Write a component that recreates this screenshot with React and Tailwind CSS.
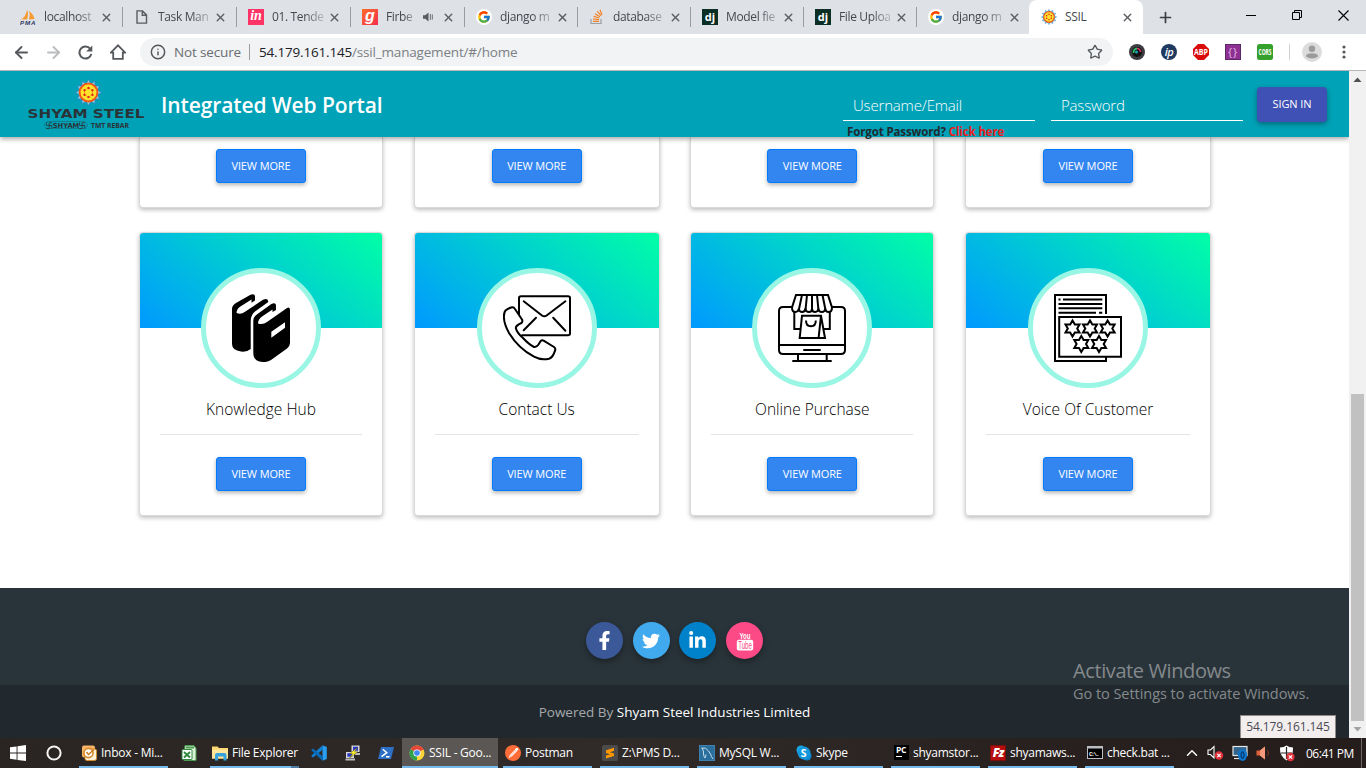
import React from 'react';
import { ArrowLeft, ArrowRight, Star, X, Plus, Info, ChevronUp } from 'lucide-react';
import { FaFacebookF, FaTwitter, FaLinkedinIn } from 'react-icons/fa';
import { FcGoogle } from 'react-icons/fc';

/* ---------- small drawings ---------- */

function Sun({ size = 16 }) {
  const rays = Array.from({ length: 12 }, (_, i) => i * 30);
  return (
    <svg width={size} height={size} viewBox="0 0 26 26">
      {rays.map((a) => (
        <path key={a} d="M10.6 4.6 L13 0.6 L15.4 4.6Z" fill="#8fd3e6" stroke="#2a86c8" strokeWidth="0.7" transform={`rotate(${a} 13 13)`} />
      ))}
      <circle cx="13" cy="13" r="8.6" fill="#ffe32b" stroke="#f0581c" strokeWidth="1.9" />
      <path d="M13 8.6 L16.8 10.8 V15.2 L13 17.4 L9.2 15.2 V10.8Z" fill="none" stroke="#f5a01c" strokeWidth="0.8" />
      {[0, 60, 120, 180, 240, 300].map((a) => (
        <circle key={a} cx="13" cy="8.6" r="1.15" fill="#e0241c" transform={`rotate(${a} 13 13)`} />
      ))}
    </svg>
  );
}

const PmaIcon = () => (
  <svg width="16" height="16" viewBox="0 0 16 16">
    <path d="M7 0.5 Q9 5 7 10.5 L2 10.5 Q6.5 6 7 0.5Z M9 2 Q13.5 5 14.5 10 L9 10.5 Q10.5 6 9 2Z" fill="#f79a33" />
    <path d="M4.5 3 Q4.5 8 0.8 10.5 H3Z" fill="#f9b978" />
    <text x="0" y="15.8" fontSize="6.2" fontWeight="900" fontStyle="italic" fontFamily="Liberation Sans, sans-serif" fill="#2e3863" textLength="15.5">PMA</text>
  </svg>
);
const InIcon = () => (
  <span className="flex h-4 w-4 items-center justify-center bg-[#ff3366] pb-[2px] font-['Liberation_Serif',serif] text-[14px] font-bold italic leading-none text-white">in</span>
);
const GIcon = () => (
  <span className="flex h-4 w-4 items-center justify-center bg-gradient-to-br from-[#fa6a1f] to-[#f5264d] pb-[3px] font-['Liberation_Sans',sans-serif] text-[16px] font-bold italic leading-none text-white">g</span>
);
const GoogleIcon = () => (
  <span className="flex h-4 w-4 items-center justify-center rounded-full bg-white"><FcGoogle size={14} /></span>
);
const StackIcon = () => (
  <svg width="16" height="16" viewBox="0 0 16 16" fill="none" strokeWidth="1.2">
    <path d="M2 10 V14.5 H12 V10" stroke="#9aa0a6" />
    <path d="M4 12.3 H10 M4 10 L10 10.6 M4.6 7.4 L10.3 9 M6 4.7 L11 7.7 M8.2 2.2 L12 6.6 M11 0.8 L13 6" stroke="#f48024" />
  </svg>
);
const DjIcon = () => (
  <span className="flex h-4 w-4 items-center justify-center bg-[#0c2f25] pb-[2px] font-['Open_Sans',sans-serif] text-[11px] font-bold leading-none text-white">dj</span>
);
const PageIcon = () => (
  <svg width="12" height="14" viewBox="0 0 12 14" fill="none" stroke="#5a5d61" strokeWidth="1.4"><path d="M1 0.9 H6.5 L10.5 4.9 V13.1 H1Z M6.3 1 V5.2 H10.5" /></svg>
);
const SpeakerIcon = () => (
  <svg width="11" height="10" viewBox="0 0 11 10"><path d="M0 3.2 H2.2 L5.5 0.5 V9.5 L2.2 6.8 H0Z" fill="#5a5d61" /><path d="M7.3 2 V8 M9.3 2.4 V7.6" stroke="#6b6e72" strokeWidth="1" /></svg>
);

const BooksIcon = () => (
  <svg width="68" height="68" viewBox="0 0 68 68">
    <path d="M5 15 Q5 11.5 9 9 L23.5 0.8 Q28 -1.2 28 3 V6.5 L24.5 8.8 V5.6 L13 12.8 Q9.4 15.4 9.6 19 Q14 20.8 18 17.8 L36 5.8 Q41 3.6 41.3 8 L29 16.8 Q23.7 20.5 23.7 27 V55 Q20 58.2 14 57.5 Q5 56.3 5 50Z" />
    <path d="M26.3 27 Q26.3 22.5 30.5 20 L44 10.2 Q49 7.4 49 12 V16 L45.5 18 V15.4 L35 22.5 Q31 25.5 31 29.5 Q36 31 40 28 L60 14 Q63 12.2 63 16 V49 Q63 52.3 60 54.5 L44 66 Q40 68.8 34 67.8 Q26.3 66.5 26.3 59Z" />
    <path d="M44.3 37.7 L58 28.3 V33.7 L44.3 43.7Z" fill="#fff" />
  </svg>
);
const ContactIcon = () => (
  <svg width="68" height="68" viewBox="0 0 68 68" fill="none" stroke="#000" strokeWidth="2" strokeLinecap="round" strokeLinejoin="round">
    <path d="M16 20 V4 Q16 2.2 18 2.2 H65 Q67 2.2 67 4 V39.5 Q67 41.3 65 41.3 H19" />
    <path d="M20.7 7.3 L39 21.5 Q41.3 23.2 43.6 21.5 L62.4 7.3 M33 23.7 L20.7 36.3 M50.2 23.7 L62.4 36.8" />
    <path d="M2.5 16.5 Q5.5 14 9.2 13.2 Q10.8 13 12 15 L19 25.5 Q20 27.4 18.4 29 Q12.8 31.5 12.8 34 Q14 39 20 44 Q26 50.5 31 53 Q33.4 53.6 35.5 50.5 L37.5 47.2 Q39 45.6 41 46.8 L51 53 Q53 54.5 52 56.6 Q50 63.5 46 64.7 Q38 66.6 31 62.7 Q15.5 54.5 6 39 Q1 30 0.9 23 Q0.8 18.5 2.5 16.5Z" />
  </svg>
);
const ShopIcon = () => (
  <svg width="68" height="68" viewBox="0 0 68 68" fill="none" stroke="#000" strokeWidth="2">
    <path d="M14 13 H5 Q1 13 1 17 V56 Q1 60 5 60 H63 Q67 60 67 56 V17 Q67 13 63 13 H54 M1 51 H67 M25.3 56 H42.7 M20 60 V67 M48.7 60 V67 M14.3 67 H53.7" />
    <path d="M18 1 H50 L54 13.5 Q54 18 50.5 18 Q47.5 18 47.3 14.5 Q47 18 43.8 18 Q40.6 18 40.4 14.5 Q40 18 37.2 18 Q34 18 34 14.5 Q34 18 31 18 Q27.6 18 27.5 14.5 Q27 18 24.2 18 Q21 18 20.8 14.5 Q20.4 18 17.4 18 Q14 18 14 13.5Z" />
    <path d="M24 1 L21 15 M29 1 L27.6 15 M34 1 V15 M39 1 L40.4 15 M44.5 1 L47.3 15" />
    <path d="M16.3 18 V35 H22 M51.8 18 V35 H46" />
    <path d="M24 21.7 H43 L47 44 H21.7Z M43 21.7 L40.6 44 M28 26.5 Q28 32.3 33 32.3 Q37.8 32.3 37.8 26.5" />
  </svg>
);
const starPoints = (cx, cy) =>
  Array.from({ length: 12 }, (_, i) => {
    const r = i % 2 ? 4.7 : 8.1;
    const a = (Math.PI / 6) * i - Math.PI / 2;
    return `${(cx + r * Math.cos(a)).toFixed(2)},${(cy + r * Math.sin(a)).toFixed(2)}`;
  }).join(' ');
const VoiceIcon = () => (
  <svg width="68" height="68" viewBox="0 0 68 68" fill="none" stroke="#000" strokeWidth="2">
    <path d="M52 20 V1 H1 V67 H52 V63" />
    <path d="M4.5 5.5 H6.5 M9 5.5 H48.3 M4.5 10 H48.3 M4.5 14.3 H48.3 M4.5 18.7 H42 M45 18.7 H48.3" />
    <path d="M5.2 23 H67 V62.8 H5.2Z" />
    {[[18.5, 34.5], [36, 34.5], [53.6, 34.5], [27.3, 50], [45, 50]].map(([x, y]) => (
      <polygon key={`${x}-${y}`} points={starPoints(x, y)} strokeWidth="2" />
    ))}
  </svg>
);

/* ---------- browser chrome ---------- */

const tabs = [
  { title: 'localhost', icon: <PmaIcon />, wide: true },
  { title: 'Task Man', icon: <PageIcon />, wide: true },
  { title: '01. Tende', icon: <InIcon />, wide: true },
  { title: 'Firbe', icon: <GIcon />, wide: true, audio: true },
  { title: 'django m', icon: <GoogleIcon /> },
  { title: 'database', icon: <StackIcon /> },
  { title: 'Model fie', icon: <DjIcon /> },
  { title: 'File Uploa', icon: <DjIcon /> },
  { title: 'django m', icon: <GoogleIcon /> },
];

function Tab({ title, icon, audio, wide }) {
  return (
    <div className={`relative flex h-[34px] shrink-0 items-center pl-3 ${wide ? 'w-[114px]' : 'w-[113px]'}`}>
      <span className="flex w-4 shrink-0 justify-center">{icon}</span>
      <span className={`ml-2 shrink-0 whitespace-nowrap text-[12px] tracking-[-0.35px] text-[#45494d] [mask-image:linear-gradient(to_right,black_60%,rgba(0,0,0,0.25)_95%)] ${audio ? 'w-[30px]' : 'w-[54px]'}`}>{title}</span>
      {audio && <span className="ml-[7px] mr-[8px] shrink-0"><SpeakerIcon /></span>}
      <X size={13} strokeWidth={2.6} className={`${audio ? '' : 'ml-[2px]'} shrink-0 text-[#5a5d61]`} />
      <span className="absolute right-[-1px] top-[7px] h-5 w-px bg-[#999da2]" />
    </div>
  );
}

function TabStrip() {
  return (
    <div className="flex h-[34px] items-center bg-[#dee1e6] pl-2">
      {tabs.map((t, i) => <Tab key={i} {...t} />)}
      <div className="z-10 flex h-[34px] w-[114px] shrink-0 items-center rounded-t-lg bg-white pl-3">
        <Sun size={16} />
        <span className="ml-2 w-[53px] text-[12px] tracking-[-0.3px] text-[#45494d]">SSIL</span>
        <X size={13} strokeWidth={2.6} className="ml-[3px] text-[#5a5d61]" />
      </div>
      <Plus size={17} strokeWidth={2.4} className="ml-[14px] shrink-0 text-[#3c4043]" />
      <div className="ml-auto flex items-center gap-9 pb-1 pr-[17px]">
        <span className="h-px w-[10px] bg-black" />
        <svg width="10" height="10" viewBox="0 0 10 10" fill="none" stroke="#000"><path d="M0.5 2.5 H7.5 V9.5 H0.5Z M2.5 2.5 V0.5 H9.5 V7.5 H7.5" /></svg>
        <svg width="11" height="11" viewBox="0 0 11 11" stroke="#000" strokeWidth="1.1"><path d="M0.5 0.5 L10.5 10.5 M10.5 0.5 L0.5 10.5" /></svg>
      </div>
    </div>
  );
}

function Toolbar() {
  return (
    <div className="flex h-[37px] items-center border-b border-[#b5b6b8] bg-white pl-[12px] text-[#55585c]">
      <ArrowLeft size={19} strokeWidth={2.4} />
      <ArrowRight size={19} strokeWidth={2.4} className="ml-[13px] text-[#babcbe]" />
      <svg className="ml-[15px]" width="15" height="15" viewBox="0 0 15 15"><path d="M12.3 4 A6 6 0 1 0 13.3 9" fill="none" stroke="#55585c" strokeWidth="2" /><path d="M14.3 0.5 V6.6 H8.2Z" fill="#55585c" /></svg>
      <svg className="ml-[17px]" width="16" height="16" viewBox="0 0 16 16" fill="none" stroke="#55585c" strokeWidth="1.8"><path d="M0.8 8.7 H3.2 V14.8 H12.8 V8.7 H15.2 L8 1.3Z" /></svg>
      <div className="ml-[14px] flex h-7 w-[973px] items-center rounded-full bg-[#f1f3f4] pl-[10px] pr-[10px] text-[13.5px]">
        <Info size={16} strokeWidth={2.2} />
        <span className="ml-2 w-[67px] whitespace-nowrap tracking-[-0.15px] text-[#6a6e72]">Not secure</span>
        <span className="ml-2 mr-[9px] h-4 w-px bg-[#9a9da1]" />
        <span className="tracking-[-0.18px] text-[#202124]">54.179.161.145<span className="text-[#7b8085]">/ssil_management/#/home</span></span>
        <Star size={16} strokeWidth={2} className="ml-auto" />
      </div>
      <div className="ml-4 flex items-center gap-4">
        <svg width="16" height="16" viewBox="0 0 16 16"><circle cx="8" cy="8" r="8" fill="#3b3b40" /><circle cx="8" cy="8" r="5" fill="#111" /><path d="M8 4.5 A3.5 3.5 0 0 1 11.5 8" stroke="#e1356b" strokeWidth="1.6" fill="none" /><path d="M4.7 9 A3.5 3.5 0 0 1 8 4.5" stroke="#2bc46c" strokeWidth="1.8" fill="none" /><circle cx="7.5" cy="8" r="1.5" fill="#1aa3b8" /></svg>
        <span className="flex h-4 w-4 items-center justify-center rounded-full bg-[#1f3a5f] pb-[2px] text-[11px] font-semibold italic leading-none tracking-[-0.5px] text-white">ip</span>
        <svg width="16" height="16" viewBox="0 0 16 16"><path d="M5 0 H11 L16 5 V11 L11 16 H5 L0 11 V5Z" fill="#d90b0b" /><text x="1" y="11" fontSize="8.5" fontWeight="700" fontFamily="Open Sans, sans-serif" fill="#fff" textLength="14" lengthAdjust="spacingAndGlyphs">ABP</text></svg>
        <span className="flex h-4 w-4 items-center justify-center border border-[#5a2a66] bg-[#8e3192] pb-[2px] text-[11px] leading-none tracking-[1px] text-[#e3b6e6]">{'{}'}</span>
        <svg width="16" height="16" viewBox="0 0 16 16"><rect width="16" height="16" rx="2.5" fill="#35a02c" /><text x="1.5" y="11" fontSize="8" fontWeight="700" fontFamily="Open Sans, sans-serif" fill="#fff" textLength="13" lengthAdjust="spacingAndGlyphs">CORS</text></svg>
      </div>
      <span className="ml-[16px] h-4 w-px bg-[#cfd1d4]" />
      <svg className="ml-[12px]" width="20" height="20" viewBox="0 0 20 20"><circle cx="10" cy="10" r="10" fill="#dcdcdc" /><circle cx="10" cy="6.7" r="3.2" fill="#9b9b9b" /><path d="M4 14.5 Q4 11.3 10 11.3 Q16 11.3 16 14.5 Q13.5 16.5 10 16.5 Q6.5 16.5 4 14.5Z" fill="#9b9b9b" /></svg>
      <svg className="ml-[20px]" width="4" height="14" viewBox="0 0 4 14" fill="#55585c"><circle cx="2" cy="2" r="1.6" /><circle cx="2" cy="7" r="1.6" /><circle cx="2" cy="12" r="1.6" /></svg>
    </div>
  );
}

/* ---------- page ---------- */

function Brand() {
  return (
    <div className="flex w-[118px] flex-col items-center">
      <span className="pl-[5px]"><Sun size={27} /></span>
      <svg width="118" height="24" viewBox="0 0 118 24" fontFamily="DejaVu Sans, sans-serif" fill="#2b3338">
        <text x="0.5" y="11.5" fontSize="13" fontWeight="700" textLength="117" lengthAdjust="spacingAndGlyphs">SHYAM STEEL</text>
        <path d="M20 15.5 H58 L61 19 L58 22.5 H20 L17 19Z" fill="none" stroke="#2b3338" strokeOpacity="0.5" strokeWidth="0.6" />
        <text x="19" y="21.8" fontSize="7" fontWeight="700" textLength="40" lengthAdjust="spacingAndGlyphs">卐SHYAM卐</text>
        <text x="64" y="22" fontSize="7.5" fontWeight="700" textLength="38" lengthAdjust="spacingAndGlyphs" fontFamily="Open Sans, sans-serif">TMT REBAR</text>
      </svg>
    </div>
  );
}

function Field({ label }) {
  return (
    <div className="flex h-[31px] w-[192px] items-center border-b border-white pl-[10px] text-[15px] font-light tracking-[-0.18px] text-white">{label}</div>
  );
}

function Header() {
  return (
    <header className="z-10 flex h-[66px] shrink-0 items-start bg-[#00a2b7] pl-[27px] shadow-[0_2px_5px_rgba(0,0,0,0.35)]">
      <div className="mt-2"><Brand /></div>
      <h1 className="ml-4 mt-[17px] whitespace-nowrap text-[21px] font-semibold leading-[34px] tracking-[-0.1px] text-white">Integrated Web Portal</h1>
      <div className="ml-auto mr-[22px] flex items-start">
        <div className="mt-[19px] flex flex-col">
          <div className="flex gap-4"><Field label="Username/Email" /><Field label="Password" /></div>
          <p className="ml-1 mt-[3px] whitespace-nowrap text-[11.5px] font-bold leading-4 tracking-[-0.12px] text-[#1f2a30]">Forgot Password? <span className="text-[#ee1c1c]">Click here</span></p>
        </div>
        <button className="ml-[14px] mt-4 h-[35px] w-[70px] whitespace-nowrap rounded bg-[#3f51b5] text-[11px] font-medium tracking-[-0.1px] text-white shadow-[0_2px_5px_rgba(0,0,0,0.35)]">SIGN IN</button>
      </div>
    </header>
  );
}

const ViewMore = () => (
  <button className="h-[34px] w-[90px] whitespace-nowrap rounded-[3px] border border-[#007bff] bg-[#3385f0] text-[11px] font-medium tracking-[-0.12px] text-white shadow-[0_2px_4px_rgba(0,0,0,0.3)]">VIEW MORE</button>
);

function Card({ title, icon }) {
  return (
    <div className="flex h-[284px] flex-col items-center overflow-hidden rounded border border-black/15 bg-white shadow-[0_2px_4px_rgba(0,0,0,0.25)]">
      <div className="h-[95px] w-full shrink-0 bg-[linear-gradient(40deg,#0099ff,#00ffa6)] bg-no-repeat" />
      <div className="-mt-[60px] flex h-[120px] w-[120px] shrink-0 items-center justify-center rounded-full border-[5px] border-[#99f6e4] bg-white">{icon}</div>
      <h2 className="mt-[9px] whitespace-nowrap text-[15.5px] font-[350] leading-6 text-black">{title}</h2>
      <div className="mb-[22px] mt-[13px] w-full px-5"><div className="h-px bg-[#e4e4e4]" /></div>
      <ViewMore />
    </div>
  );
}

const cards = [
  { title: 'Knowledge Hub', icon: <BooksIcon /> },
  { title: 'Contact Us', icon: <ContactIcon /> },
  { title: 'Online Purchase', icon: <ShopIcon /> },
  { title: 'Voice Of Customer', icon: <VoiceIcon /> },
];

const YouTubeMark = () => (
  <svg width="18" height="20" viewBox="0 0 18 20" fontFamily="Liberation Sans Narrow, Liberation Sans, sans-serif" fontWeight="700">
    <text x="3.5" y="7.8" fontSize="9.5" fill="#fff" textLength="11" lengthAdjust="spacingAndGlyphs">You</text>
    <rect x="0.8" y="8.8" width="16.4" height="10.7" rx="2" fill="#fff" />
    <text x="2.2" y="17.7" fontSize="10" fontWeight="400" fill="#fb4a86" textLength="13.6" lengthAdjust="spacingAndGlyphs">Tube</text>
  </svg>
);

function Social({ className, children }) {
  return <a className={`flex h-[37px] w-[37px] items-center justify-center rounded-full text-white shadow-[0_3px_6px_rgba(0,0,0,0.35)] ${className}`}>{children}</a>;
}

function Page() {
  return (
    <div className="flex min-w-0 flex-1 flex-col overflow-hidden bg-white">
      <Header />
      <main className="flex h-[451px] shrink-0 flex-col pl-[139px]">
        <div className="grid grid-cols-[244px_246px_244px_246px] gap-x-[30.67px]">
          {cards.map((c) => (
            <div key={c.title} className="flex h-[71px] justify-center rounded-b border border-t-0 border-black/15 pt-3 shadow-[0_2px_4px_rgba(0,0,0,0.25)]"><ViewMore /></div>
          ))}
        </div>
        <div className="mt-6 grid grid-cols-[244px_246px_244px_246px] gap-x-[30.67px]">
          {cards.map((c) => <Card key={c.title} {...c} />)}
        </div>
      </main>
      <footer className="flex flex-1 flex-col bg-[#29343a]">
        <div className="flex h-[97px] items-start justify-center gap-[9.7px] pt-[34px]">
          <Social className="bg-[#3b5998]"><FaFacebookF size={19} /></Social>
          <Social className="bg-[#41aaee]"><FaTwitter size={18} /></Social>
          <Social className="bg-[#0082ca]"><FaLinkedinIn size={19} /></Social>
          <Social className="bg-[#fb4a86]"><YouTubeMark /></Social>
        </div>
        <div className="flex flex-1 items-center justify-center bg-[#21292f] pt-px text-[13.5px] text-[#a6a9ac]">
          <p className="whitespace-nowrap">Powered By <span className="text-white">Shyam Steel Industries Limited</span></p>
        </div>
      </footer>
    </div>
  );
}

function Scrollbar() {
  return (
    <div className="flex w-[17px] shrink-0 flex-col items-center bg-[#f1f1f1]">
      <svg width="17" height="17" viewBox="0 0 17 17"><path d="M4.5 11 L8.5 6.5 L12.5 11Z" fill="#505050" /></svg>
      <div className="mt-[306px] h-[327px] w-[13px] bg-[#c1c1c1]" />
      <svg width="17" height="17" viewBox="0 0 17 17"><path d="M4.5 6 L8.5 10.5 L12.5 6Z" fill="#a3a3a3" /></svg>
    </div>
  );
}

/* ---------- taskbar ---------- */

function Task({ icon, label, active, stacked }) {
  return (
    <div className={`flex h-[30px] shrink-0 flex-col ${active ? 'mr-px w-[96px] bg-[#5b5755] px-0' : 'w-[97px] px-1'}`}>
      <div className={`flex h-7 items-center pt-px ${active ? 'pl-[7px]' : 'pl-[2px]'}`}>
        <span className="flex h-4 w-4 shrink-0 items-center justify-center">{icon}</span>
        <span className="ml-1 whitespace-nowrap text-[12px] tracking-[-0.25px] text-white">{label}</span>
      </div>
      <div className="flex h-[2px] bg-[#76b9ed]">{stacked && <span className="ml-auto w-2 bg-[#4f7da3]" />}</div>
    </div>
  );
}

const OutlookIcon = () => (
  <svg width="16" height="16" viewBox="0 0 16 16"><rect x="1" y="0.5" width="13" height="12" rx="2" fill="#f7b569" /><rect x="4" y="4" width="11.5" height="11.5" rx="2" fill="#fff3d6" stroke="#d38b2e" /><circle cx="7.5" cy="8" r="4.6" fill="#fff" stroke="#d9892b" strokeWidth="1.6" /><path d="M5.5 7 L7.5 9.5 L13 4.5" fill="none" stroke="#c87a1c" strokeWidth="1.4" /></svg>
);
const ExcelIcon = () => (
  <svg width="16" height="16" viewBox="0 0 16 16"><path d="M4 0.5 H13 L15 3.5 V15.5 H3Z" fill="#d9efd5" stroke="#4c9b52" /><rect x="1" y="4.5" width="10" height="10" rx="1" fill="#fff" stroke="#2d8a3e" /><path d="M3 7 L9 12.5 M9 7 L3 12.5" stroke="#2d8a3e" strokeWidth="2" /><path d="M5 2.5 H13" stroke="#4c9b52" strokeWidth="2" /></svg>
);
const FolderIcon = () => (
  <svg width="16" height="16" viewBox="0 0 16 16"><path d="M0 1.5 H5.5 L7 3 H16 V13.5 H0Z" fill="#ffd970" /><path d="M0 4.5 H16 V13.5 H0Z" fill="#ffe69a" /><path d="M3 15.5 V10 Q3 8 5 8 H12.5 Q14.5 8 14.5 10 V15.5 H11.5 V11.5 H6 V15.5Z" fill="#36a3df" /></svg>
);
const VsCodeIcon = () => (
  <svg width="16" height="16" viewBox="0 0 16 16"><path d="M11.5 0.3 L15.8 2 V14 L11.5 15.7Z" fill="#2a9df0" /><path d="M11.5 0.3 L12 4.5 L2 12.6 L0.5 11.5 V10.6Z" fill="#0f7fd0" /><path d="M11.5 15.7 L12 11.5 L2 3.4 L0.5 4.5 V5.4Z" fill="#0a6ab8" /></svg>
);
const PuttyIcon = () => (
  <svg width="16" height="16" viewBox="0 0 16 16"><rect x="6.5" y="0.5" width="8" height="6.5" fill="#d8d8d8" /><rect x="8" y="1.7" width="5" height="4" fill="#2736c9" /><rect x="1" y="7" width="8" height="6" fill="#d8d8d8" /><rect x="2.3" y="8.2" width="5" height="3.5" fill="#2736c9" /><path d="M0.5 13.5 H10 V15.5 H0.5Z M9 8 H15 V10 H10Z" fill="#bcbcbc" /><path d="M12.5 2.5 L4.5 8.7 H7.6 L4.5 13 L13 6.8 H9.5Z" fill="#fff02b" stroke="#3a3a10" strokeWidth="0.4" /></svg>
);
const PowerShellIcon = () => (
  <svg width="16" height="14" viewBox="0 0 16 14"><path d="M3 1 H16 L13 13 H0Z" fill="#2c6fc5" /><path d="M4.8 3.3 L8.8 6.7 L3.5 10.7 M8 10.7 H11.5" stroke="#fff" strokeWidth="1.5" fill="none" /></svg>
);
const ChromeIcon = () => (
  <svg width="16" height="16" viewBox="0 0 16 16"><circle cx="8" cy="8" r="7.5" fill="#fdd53a" /><path d="M8 8 L1.5 4.25 A7.5 7.5 0 0 1 14.5 4.25 Z" fill="#e5473a" /><path d="M8 8 L1.5 4.25 A7.5 7.5 0 0 0 8 15.5Z" fill="#2fa14f" /><path d="M8 8 H11 L8 15.5Z" fill="#fdd53a" /><path d="M8 4.4 H14.6" stroke="#e5473a" strokeWidth="1" /><circle cx="8" cy="8" r="3.6" fill="#fff" /><circle cx="8" cy="8" r="2.8" fill="#4285f4" /></svg>
);
const PostmanIcon = () => (
  <svg width="16" height="16" viewBox="0 0 16 16"><circle cx="8" cy="8" r="8" fill="#ff6c37" /><path d="M4 12.5 L5.5 9.5 L10.5 4.5 L12 6 L7 11Z" fill="#ffd9ca" stroke="#fff" strokeWidth="0.6" /><circle cx="11.8" cy="4.3" r="1.4" fill="#fff" /></svg>
);
const SublimeIcon = () => (
  <svg width="16" height="16" viewBox="0 0 16 16"><rect width="16" height="16" rx="1.5" fill="#4b4b4b" /><path d="M4 5.3 L12 2.8 V5.8 L8 7.2 L12 8.5 V11 L4 13.5 V10.5 L8 9.2 L4 8Z" fill="#ff9800" /></svg>
);
const MySqlIcon = () => (
  <svg width="16" height="16" viewBox="0 0 16 16"><rect width="16" height="16" rx="1" fill="#2a6e9e" stroke="#5d9bc4" strokeWidth="0.8" /><path d="M2.5 3 Q7 2 9.5 6 Q12 9.5 12.5 11.5 L14 14 M3 3 Q5 6 4.5 9 Q5 12 6 13 Q7 11 7 9.5" fill="none" stroke="#d7e8f3" strokeWidth="0.9" /></svg>
);
const SkypeIcon = () => (
  <svg width="16" height="16" viewBox="0 0 16 16"><circle cx="5" cy="5" r="4.5" fill="#19a8e6" /><circle cx="11" cy="11" r="4.5" fill="#0d82cf" /><circle cx="8" cy="8" r="6.5" fill="#1297dd" /><text x="4.7" y="11.8" fontSize="10.5" fontWeight="700" fill="#fff" fontFamily="Open Sans, sans-serif">S</text></svg>
);
const PcIcon = () => (
  <span className="flex h-[15px] w-[15px] flex-col items-center bg-black pt-px text-[8.5px] font-bold leading-[8px] tracking-[-0.3px] text-white">PC<span className="ml-[-5px] mt-[2px] h-px w-[6px] bg-white" /></span>
);
const FzIcon = () => (
  <span className="flex h-4 w-4 items-center justify-center border border-[#7b0d0d] bg-[#b80d0d] text-[12px] font-extrabold italic leading-none tracking-[-1px] text-white">Fz</span>
);
const CmdIcon = () => (
  <svg width="16" height="13" viewBox="0 0 16 13"><rect width="16" height="13" fill="#b9bdc2" /><rect x="1" y="2.5" width="14" height="9.5" fill="#000" /><text x="2" y="9.5" fontSize="6" fontWeight="700" fill="#fff" fontFamily="Liberation Mono, monospace" textLength="10.5">C:\.</text></svg>
);
const RedBadge = ({ x, y }) => (
  <g transform={`translate(${x} ${y})`}><circle cx="4" cy="4" r="4.2" fill="#e0303a" /><path d="M2.3 2.3 L5.7 5.7 M5.7 2.3 L2.3 5.7" stroke="#fff" strokeWidth="1.2" /></g>
);

function Taskbar() {
  return (
    <div className="flex h-[30px] items-center bg-[#2b2624] bg-[linear-gradient(90deg,#2a2522,#302b29_45%,#28211f_75%,#241d1c)]">
      <span className="flex w-9 justify-center"><svg width="16" height="16" viewBox="0 0 16 16" fill="#fff"><path d="M0 2.3 L6.6 1.4 V7.6 H0Z M7.5 1.2 L16 0 V7.6 H7.5Z M0 8.5 H6.6 V14.7 L0 13.8Z M7.5 8.5 H16 V16 L7.5 14.9Z" /></svg></span>
      <span className="mr-[3px] flex w-9 justify-center"><svg width="16" height="16" viewBox="0 0 16 16"><circle cx="8" cy="8" r="6.6" fill="none" stroke="#f4f4f4" strokeWidth="2" /></svg></span>
      <Task icon={<OutlookIcon />} label="Inbox - Mi..." />
      <span className="flex w-[34px] justify-center"><ExcelIcon /></span>
      <Task icon={<FolderIcon />} label="File Explorer" stacked />
      <span className="-ml-px flex w-[34px] justify-center"><VsCodeIcon /></span>
      <span className="flex w-[33px] justify-center"><PuttyIcon /></span>
      <span className="flex w-[33px] justify-center"><PowerShellIcon /></span>
      <Task icon={<ChromeIcon />} label="SSIL - Goo..." active />
      <Task icon={<PostmanIcon />} label="Postman" />
      <Task icon={<SublimeIcon />} label="Z:\PMS D..." />
      <Task icon={<MySqlIcon />} label="MySQL W..." />
      <Task icon={<SkypeIcon />} label="Skype" />
      <Task icon={<PcIcon />} label="shyamstor..." />
      <Task icon={<FzIcon />} label="shyamaws..." />
      <Task icon={<CmdIcon />} label="check.bat ..." />
      <div className="flex flex-1 items-center pl-[5px]">
        <ChevronUp size={18} strokeWidth={2} className="shrink-0 text-white" />
        <svg className="ml-[6px]" width="17" height="16" viewBox="0 0 17 16"><path d="M1 5 H3.5 L7 1.5 V13 L3.5 9.5 H1Z" fill="none" stroke="#fff" strokeWidth="1.1" /><RedBadge x={8} y={6.5} /></svg>
        <svg className="ml-2" width="17" height="17" viewBox="0 0 17 17"><rect x="1" y="1.5" width="14" height="9" fill="#33658c" stroke="#e6e6e6" strokeWidth="1.2" /><path d="M2 13.5 H8" stroke="#e6e6e6" strokeWidth="1.2" /><ellipse cx="10.5" cy="10" rx="4.6" ry="6" fill="#0b76cc" /><ellipse cx="10.5" cy="10" rx="1.4" ry="3.2" fill="none" stroke="#083c70" strokeWidth="1.2" /></svg>
        <svg className="ml-[7px]" width="15" height="16" viewBox="0 0 15 16"><path d="M0.5 5.5 H4 L9 1.5 V14.5 L4 10.5 H0.5Z" fill="#e0613a" /><path d="M4 5.5 L9 1.5 V14.5 L4 10.5Z" fill="#f39a7c" /><path d="M11.5 5 Q13.5 8 11.5 11" stroke="#7d3323" fill="none" /></svg>
        <svg className="ml-2" width="16" height="17" viewBox="0 0 16 17"><path d="M7.5 0.5 Q10 2.5 14 2.5 Q14.5 11 7.5 15.5 Q0.5 11 1 2.5 Q5 2.5 7.5 0.5Z" fill="#fff" /><path d="M7.5 2 V14 M2 8 H13" stroke="#292321" strokeWidth="1.2" /><RedBadge x={7.5} y={8} /></svg>
        <span className="ml-[11px] whitespace-nowrap pt-px text-[12px] tracking-[-0.5px] text-white">06:41 PM</span>
        <span className="ml-auto mr-1 h-[30px] w-px bg-[#6d6866]" />
      </div>
    </div>
  );
}

export default function App() {
  return (
    <div className="relative flex h-[768px] w-[1366px] flex-col overflow-hidden font-['Open_Sans','Noto_Sans_CJK_SC',sans-serif]">
      <TabStrip />
      <Toolbar />
      <div className="flex h-[667px] shrink-0">
        <Page />
        <Scrollbar />
      </div>
      <Taskbar />
      <div className="absolute left-[1073px] top-[657px] whitespace-nowrap text-[#84898c]">
        <p className="text-[20px] leading-7 tracking-[-0.4px]">Activate Windows</p>
        <p className="text-[14.5px] leading-[18px] tracking-[-0.04px]">Go to Settings to activate Windows.</p>
      </div>
      <div className="absolute left-[1240px] top-[715px] flex h-[23px] w-[96px] items-center justify-center whitespace-nowrap border border-b-0 border-[#8f8b8b] bg-[#f3eeee] text-[12px] tracking-[-0.1px] text-[#4a4a55]">54.179.161.145</div>
    </div>
  );
}
